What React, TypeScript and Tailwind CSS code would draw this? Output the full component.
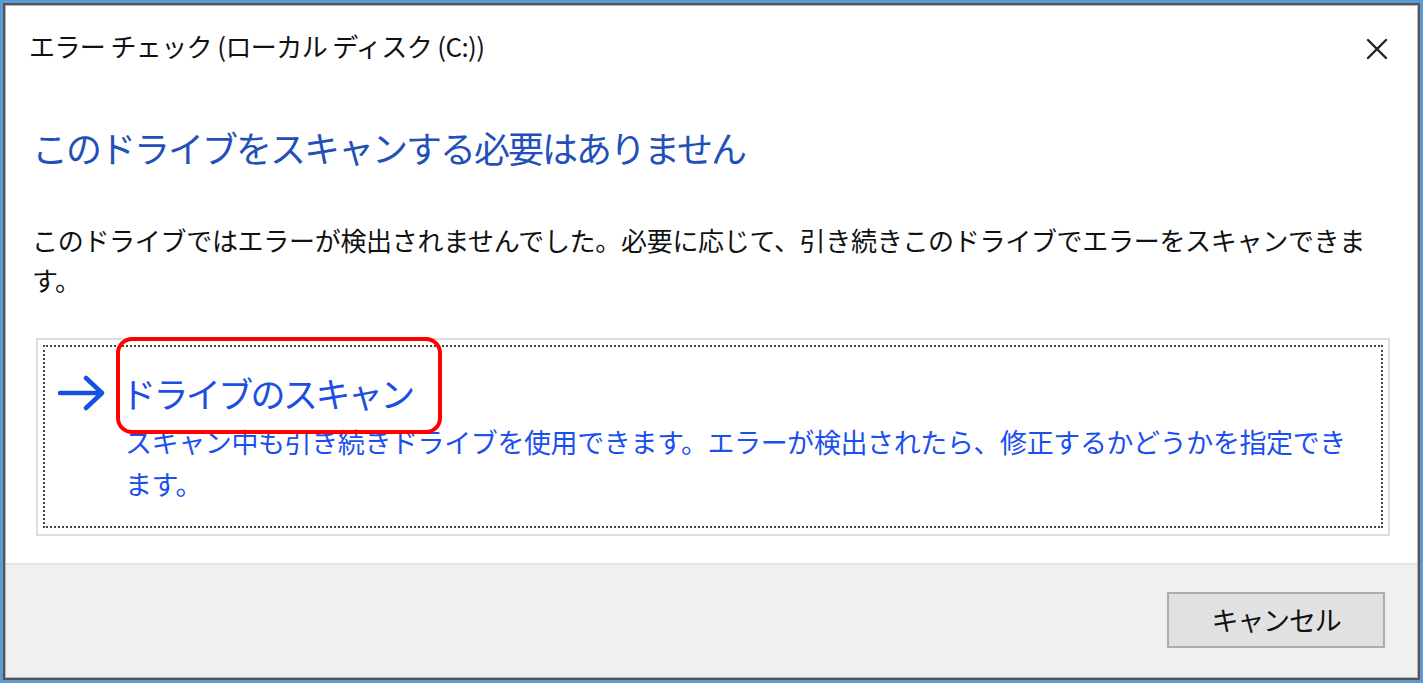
import { X } from "lucide-react";

const ArrowIcon = () => (
  <svg width="50" height="36" viewBox="0 0 50 36" fill="none" className="shrink-0">
    <path d="M3 18 H45 M29 3 L45 18 L29 33" stroke="#1652e0" strokeWidth="4.5" strokeLinecap="round" strokeLinejoin="round" />
  </svg>
);

const CommandLink = () => {
  return (
    <div className="relative mt-[38px] ml-[30px] mr-[27px] border-2 border-[#dcdcdc] px-[5px] pt-[5px] pb-[6px]">
      <div className="border-2 border-dotted border-[#444444] pt-[22px] pb-[21px] pl-[12px]">
        <div className="flex items-center h-[48px]">
          <ArrowIcon />
          <span className="ml-[14px] text-[35px] leading-[48px] tracking-[-2.6px] text-[#1c4fe0]">
            ドライブのスキャン
          </span>
        </div>
        <p className="mt-[4px] ml-[68px] w-[1238px] text-[27px] leading-[42px] tracking-[-0.4px] text-[#1b4ff0]">
          スキャン中も引き続きドライブを使用できます。エラーが検出されたら、修正するかどうかを指定できます。
        </p>
      </div>
      {/* annotation */}
      <div className="absolute left-[78px] top-[-3px] w-[326px] h-[97px] rounded-[16px] border-4 border-[#ff0000] pointer-events-none" />
    </div>
  );
};

export default function App() {
  return (
    <div className="w-[1423px] h-[683px] bg-[#5b9bd5] p-[3px] font-['Noto_Sans_CJK_JP',sans-serif]">
      <div className="w-full h-full border-2 border-[#555555]">
        <div className="w-full h-full border border-[#b5b5b5] bg-white flex flex-col">
          <div className="flex items-start justify-between pl-[23px] pr-[22px] pt-[20px]">
            <h1 className="text-[26px] leading-[40px] tracking-[-0.6px] text-[#111111]">
              エラー チェック (ローカル ディスク (C:))
            </h1>
            <X className="mt-[5px]" size={36} strokeWidth={1.6} color="#222222" />
          </div>

          <h2 className="mt-[56px] pl-[26px] text-[36px] leading-[48px] tracking-[-2px] text-[#2350b8]">
            このドライブをスキャンする必要はありません
          </h2>

          <p className="mt-[49px] pl-[26px] w-[1372px] text-[26px] leading-[40px] tracking-[-0.3px] text-[#111111]">
            このドライブではエラーが検出されませんでした。必要に応じて、引き続きこのドライブでエラーをスキャンできます。
          </p>

          <CommandLink />

          <div className="mt-auto border-t-2 border-[#e3e3e3] bg-[#f0f0f0] flex justify-end pt-[27px] pb-[29px] pr-[32px]">
            <button className="w-[218px] h-[56px] bg-[#e1e1e1] border-2 border-[#adadad] text-[27px] tracking-[-1.2px] text-[#111111]">
              キャンセル
            </button>
          </div>
        </div>
      </div>
    </div>
  );
}
